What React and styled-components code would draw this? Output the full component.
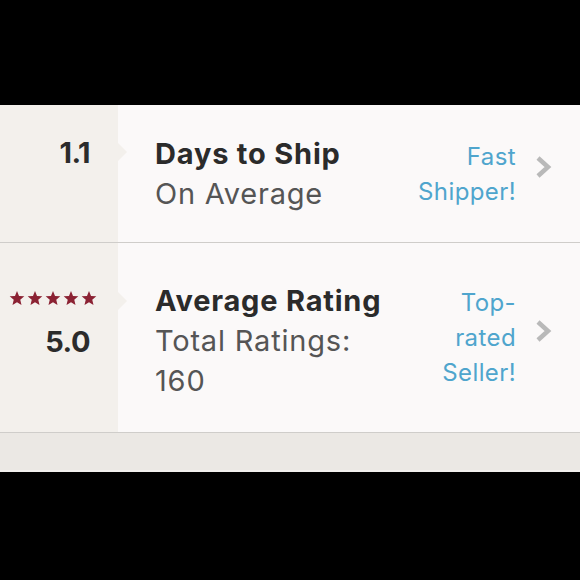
import React from "react";
import styled, { createGlobalStyle } from "styled-components";

const Global = createGlobalStyle`
  html, body {
    margin: 0;
    padding: 0;
    background: #000;
  }
  body {
    font-family: "Inter", "Open Sans", sans-serif;
  }
`;

const Screen = styled.div`
  width: 580px;
  height: 580px;
  padding-top: 105px;
  box-sizing: border-box;
  background: #000;
`;

const Panel = styled.div`
  background: #fbf9f9;
`;

const Row = styled.div`
  display: grid;
  grid-template-columns: 118px 1fr;
  height: ${(p) => p.h}px;
  border-bottom: 1px solid #cfcdca;
`;

const Side = styled.div`
  position: relative;
  background: #f3f0ec;
  padding-top: ${(p) => p.top}px;
  padding-right: 28px;
  display: flex;
  flex-direction: column;
  align-items: flex-end;
  box-sizing: border-box;

  &::after {
    content: "";
    position: absolute;
    right: -9px;
    top: ${(p) => p.notch}px;
    border-top: 9px solid transparent;
    border-bottom: 9px solid transparent;
    border-left: 9px solid #f3f0ec;
  }
`;

const Value = styled.div`
  font-size: 29px;
  font-weight: 700;
  line-height: 40px;
  color: #2b2b2b;
  letter-spacing: -0.5px;
`;

const Stars = styled.div`
  display: flex;
  gap: 2px;
  margin-right: -7px;
  margin-bottom: 16px;
`;

const Body = styled.div`
  display: flex;
  align-items: center;
  padding-left: 37px;
  padding-right: 28px;
`;

const Info = styled.div`
  flex: 1;
  padding-top: ${(p) => p.shift || 0}px;
`;

const Title = styled.div`
  font-size: 29px;
  font-weight: 700;
  line-height: 40px;
  color: #2b2b2b;
  letter-spacing: 0.8px;
`;

const Sub = styled.div`
  font-size: 29px;
  line-height: 40px;
  color: #555;
  letter-spacing: 0.8px;
  max-width: 210px;
`;

const Tag = styled.div`
  font-size: 24px;
  line-height: 35px;
  color: #4fa5cd;
  text-align: right;
  letter-spacing: 0.4px;
  max-width: 104px;
`;

const Chevron = styled.svg`
  margin-left: 19px;
  margin-top: -14px;
  flex: none;
`;

const Footer = styled.div`
  height: 37px;
  background: #ebe8e4;
  border-bottom: 2px solid #f2f0ee;
`;

const Star = () => (
  <svg width="16" height="15" viewBox="0 0 24 23">
    <path
      d="M12 0l3.1 7.6 8.1.6-6.2 5.3 1.9 8L12 17.2 5.1 21.5l1.9-8L.8 8.2l8.1-.6z"
      fill="#8b2233"
    />
  </svg>
);

const Arrow = () => (
  <Chevron width="17" height="24" viewBox="0 0 17 24">
    <path d="M3 3l10 9-10 9" fill="none" stroke="#b9b9b9" strokeWidth="4.5" />
  </Chevron>
);

export default function App() {
  return (
    <>
      <Global />
      <Screen>
        <Panel>
          <Row h={137}>
            <Side top={28} notch={38}>
              <Value>1.1</Value>
            </Side>
            <Body>
              <Info>
                <Title>Days to Ship</Title>
                <Sub>On Average</Sub>
              </Info>
              <Tag>Fast Shipper!</Tag>
              <Arrow />
            </Body>
          </Row>
          <Row h={189}>
            <Side top={48} notch={49}>
              <Stars>
                {[0, 1, 2, 3, 4].map((i) => (
                  <Star key={i} />
                ))}
              </Stars>
              <Value>5.0</Value>
            </Side>
            <Body>
              <Info shift={6}>
                <Title>Average Rating</Title>
                <Sub>Total Ratings: 160</Sub>
              </Info>
              <Tag>Top-rated Seller!</Tag>
              <Arrow />
            </Body>
          </Row>
          <Footer />
        </Panel>
      </Screen>
    </>
  );
}
